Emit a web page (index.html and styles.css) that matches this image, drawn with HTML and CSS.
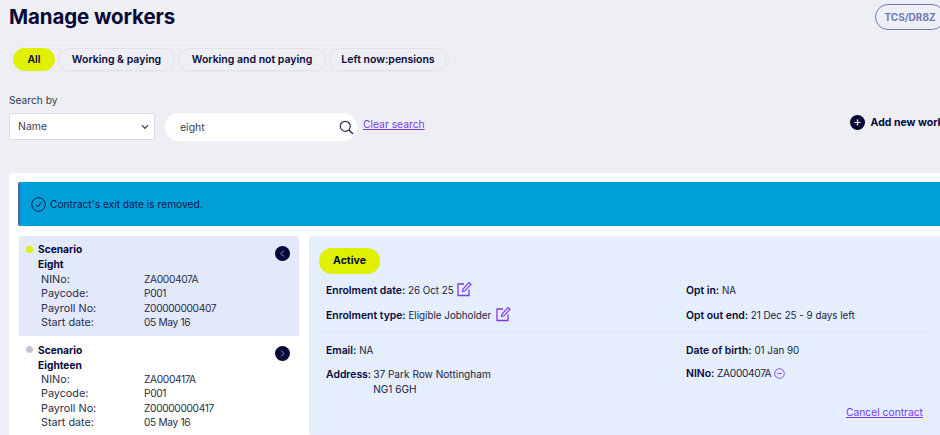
FILE: index.html
```html
<!DOCTYPE html>
<html lang="en">
<head>
<meta charset="utf-8">
<title>Manage workers</title>
<link rel="stylesheet" href="styles.css">
</head>
<body>
<div class="page">
  <header class="head">
    <h1 class="title">Manage workers</h1>
    <span class="code">TCS/DR8Z</span>
  </header>
  <nav class="tabs">
    <span class="tab tab-on">All</span>
    <span class="tab t1">Working &amp; paying</span>
    <span class="tab t2">Working and not paying</span>
    <span class="tab t3">Left now:pensions</span>
  </nav>
  <div class="search-label">Search by</div>
  <div class="search">
    <div class="select">Name
      <svg class="chev" width="8" height="6" viewBox="0 0 8 6"><path d="M1 1.2 4 4.4 7 1.2" fill="none" stroke="#33374f" stroke-width="1.2"/></svg>
    </div>
    <div class="input">eight
      <svg class="mag" width="15" height="15" viewBox="0 0 15 15"><circle cx="6.3" cy="6.3" r="5" fill="none" stroke="#2b2f45" stroke-width="1.2"/><path d="M10 10 14 14" stroke="#2b2f45" stroke-width="1.4"/></svg>
    </div>
    <a class="link clear">Clear search</a>
    <div class="add">
      <svg width="15" height="15" viewBox="0 0 15 15"><circle cx="7.5" cy="7.5" r="7.5" fill="#07083a"/><path d="M4.5 7.5h6M7.5 4.5v6" stroke="#fff" stroke-width="1.2"/></svg>
      <span>Add new worker</span>
    </div>
  </div>
  <main class="panel">
    <div class="banner">
      <svg width="15" height="15" viewBox="0 0 15 15"><circle cx="7.5" cy="7.5" r="6.8" fill="none" stroke="#08184a" stroke-width="1"/><path d="M4.6 7.8 6.8 10 10.6 4.8" fill="none" stroke="#08184a" stroke-width="1"/></svg>
      <span>Contract's exit date is removed.</span>
    </div>
    <div class="split">
      <div class="list">
        <section class="worker worker-on">
          <span class="dot dot-on"></span>
          <div class="info">
            <div class="name">Scenario<br>Eight</div>
            <dl class="facts">
              <dt>NINo:</dt><dd>ZA000407A</dd>
              <dt>Paycode:</dt><dd>P001</dd>
              <dt>Payroll No:</dt><dd>Z00000000407</dd>
              <dt>Start date:</dt><dd>05 May 16</dd>
            </dl>
          </div>
          <svg class="arrow" width="15" height="15" viewBox="0 0 15 15"><circle cx="7.5" cy="7.5" r="7.5" fill="#07083a"/><path d="M8.8 4.6 6 7.5l2.8 2.9" fill="none" stroke="#9a9bb5" stroke-width="1"/></svg>
        </section>
        <section class="worker">
          <span class="dot"></span>
          <div class="info">
            <div class="name">Scenario<br>Eighteen</div>
            <dl class="facts">
              <dt>NINo:</dt><dd>ZA000417A</dd>
              <dt>Paycode:</dt><dd>P001</dd>
              <dt>Payroll No:</dt><dd>Z00000000417</dd>
              <dt>Start date:</dt><dd>05 May 16</dd>
            </dl>
          </div>
          <svg class="arrow" width="15" height="15" viewBox="0 0 15 15"><circle cx="7.5" cy="7.5" r="7.5" fill="#07083a"/><path d="M6.2 4.6 9 7.5l-2.8 2.9" fill="none" stroke="#9a9bb5" stroke-width="1"/></svg>
        </section>
      </div>
      <section class="detail">
        <span class="status">Active</span>
        <div class="grid top">
          <div class="field"><b>Enrolment date:</b> 26 Oct 25
            <svg class="edit" width="15" height="16" viewBox="0 0 15 16"><path d="M7 3H1v11.5h11V8.5" fill="none" stroke="#7c3aed" stroke-width="1.3"/><path d="M5.5 10.5 6 8l6-6.5 2 1.800-6 6.500z" fill="none" stroke="#7c3aed" stroke-width="1.2"/></svg>
          </div>
          <div class="field"><b>Opt in:</b> NA</div>
          <div class="field"><b>Enrolment type:</b> Eligible Jobholder
            <svg class="edit gap" width="15" height="16" viewBox="0 0 15 16"><path d="M7 3H1v11.5h11V8.5" fill="none" stroke="#7c3aed" stroke-width="1.3"/><path d="M5.5 10.5 6 8l6-6.5 2 1.800-6 6.500z" fill="none" stroke="#7c3aed" stroke-width="1.2"/></svg>
          </div>
          <div class="field"><b>Opt out end:</b> 21 Dec 25 - 9 days left</div>
        </div>
        <div class="grid bottom">
          <div class="field"><b>Email:</b> NA</div>
          <div class="field"><b>Date of birth:</b> 01 Jan 90</div>
          <div class="field addr"><b>Address:</b> <span class="addr-text">37 Park Row Nottingham<br>NG1 6GH</span></div>
          <div class="field"><b>NINo:</b> <span class="num">ZA000407A</span>
            <svg class="minus" width="11" height="11" viewBox="0 0 11 11"><circle cx="5.500" cy="5.500" r="4.800" fill="none" stroke="#7c3aed" stroke-width="0.9"/><path d="M3.300 5.500h4.400" stroke="#7c3aed" stroke-width="0.9"/></svg>
          </div>
        </div>
        <div class="actions"><a class="link">Cancel contract</a></div>
      </section>
    </div>
  </main>
</div>
</body>
</html>
```
FILE: styles.css
```css
* { box-sizing: border-box; }
html, body { margin: 0; height: 435px; overflow: hidden; background: #eeeff4; }
body { font-family: Inter, "Liberation Sans", sans-serif; font-size: 10px; color: #20233f; }
.page { width: 980px; height: 435px; overflow: hidden; padding: 4px 0 0 9px; }
.head { display: flex; justify-content: space-between; align-items: flex-start; padding-right: 35px; height: 26px; }
.title { margin: 0; font-size: 20.500px; line-height: 25px; font-weight: 700; color: #07083a; letter-spacing: -0.1px; }
.code { width: 70px; height: 26px; border: 1px solid #6f7bb8; border-radius: 13px; text-align: center; line-height: 24px; font-size: 10px; font-weight: 700; color: #6f7bb8; }
.tabs { display: inline-flex; margin: 15px 0 0 1px; padding: 2px; gap: 3px; height: 27px; border: 1px solid #e9eaf0; border-radius: 14px; }
.tab { height: 23px; line-height: 21px; border: 1px solid #e0e2ea; border-radius: 12px; text-align: center; font-size: 10.500px; font-weight: 600; color: #07083a; }
.tab-on { width: 42px; background: #dff000; border-color: #dff000; }
.t1 { width: 117px; }
.t2 { width: 148px; }
.t3 { width: 118px; }
.search-label { margin-top: 22px; height: 12px; line-height: 12px; font-size: 10.200px; color: #33364c; }
.search { display: flex; align-items: flex-start; margin-top: 7px; padding-right: 26px; }
.select { position: relative; width: 146px; height: 27px; padding-left: 8px; line-height: 26px; background: #fff; border: 1px solid #dcdde3; border-radius: 2px; font-size: 10.500px; color: #3a3d52; }
.chev { position: absolute; right: 5px; top: 10px; }
.input { position: relative; width: 192px; height: 28px; margin: 0 0 0 10px; padding-left: 15px; line-height: 30px; background: #fff; border-radius: 14px; font-size: 10.500px; color: #3a3d52; }
.mag { position: absolute; right: 3px; top: 7px; }
.link { color: #7c3aed; text-decoration: underline; font-size: 10.300px; }
.clear { margin: 5px 0 0 6px; line-height: 13px; }
.add { display: flex; align-items: center; gap: 6px; margin: 1px 0 0 auto; height: 16px; font-size: 10.500px; font-weight: 700; color: #07083a; white-space: nowrap; }
.panel { margin-top: 32px; padding: 9px 9px 0; background: #fff; border-radius: 4px 0 0 0; height: 270px; }
.banner { display: flex; align-items: center; gap: 4px; height: 44px; padding-left: 11px; background: #009fd9; border-left: 2px solid #5a60a8; border-radius: 2px 0 0 2px; font-size: 10.200px; color: #08184a; }
.split { display: flex; gap: 10px; margin: 10px 0 0 1px; }
.list { width: 280px; flex: none; }
.worker { display: flex; height: 100px; padding: 7px 0 0 7px; }
.worker-on { padding-top: 6px; background: #e3e8fb; border-radius: 3px 3px 0 0; }
.dot { width: 7px; height: 7px; margin-top: 3px; border-radius: 50%; background: #c4c5d0; flex: none; }
.dot-on { margin-top: 4px; background: #dff000; }
.info { margin-left: 5px; flex: 1; }
.name { font-size: 10.200px; font-weight: 700; line-height: 14.500px; color: #07083a; }
.worker-on .name { margin-bottom: 1px; }
.facts { display: grid; grid-template-columns: 103px 1fr; grid-auto-rows: 14.400px; align-items: baseline; margin: 0 0 0 3px; line-height: 14.400px; font-size: 10.500px; color: #2a2d48; }
.facts dt { margin: 0; font-size: 10.800px; }
.facts dd { margin: 0; font-size: 10.200px; letter-spacing: -0.35px; }
.arrow { margin: 3px 9px 0 0; flex: none; }
.worker-on .arrow { margin-top: 4px; }
.detail { flex: 1; height: 200px; padding: 12px 10px 0; background: #e4eefd; border-radius: 4px; }
.status { display: block; width: 61px; height: 26px; line-height: 25px; text-align: center; border-radius: 13px; background: #dff000; font-size: 10.500px; font-weight: 700; color: #07083a; }
.grid { display: grid; grid-template-columns: 360px 1fr; padding-left: 7px; font-size: 9.800px; }
.top { margin-top: 5px; padding-bottom: 4px; border-bottom: 1px solid #dfe6f2; width: 611px; }
.bottom { margin-top: 6px; }
.field { min-height: 24.500px; line-height: 24px; white-space: nowrap; }
.bottom .field { min-height: 23px; line-height: 23px; }
.field b { font-size: 10.400px; font-weight: 600; color: #07083a; }
.num { font-size: 10.200px; letter-spacing: -0.35px; }
.edit { vertical-align: -3px; }
.gap { margin-left: 2px; }
.minus { vertical-align: -2px; }
.bottom .addr { display: flex; gap: 2px; align-items: baseline; line-height: 14.500px; padding-top: 5px; }
.addr-text { font-size: 10.100px; }
.actions { margin: 10px 18px 0 0; width: 604px; text-align: right; }
```
